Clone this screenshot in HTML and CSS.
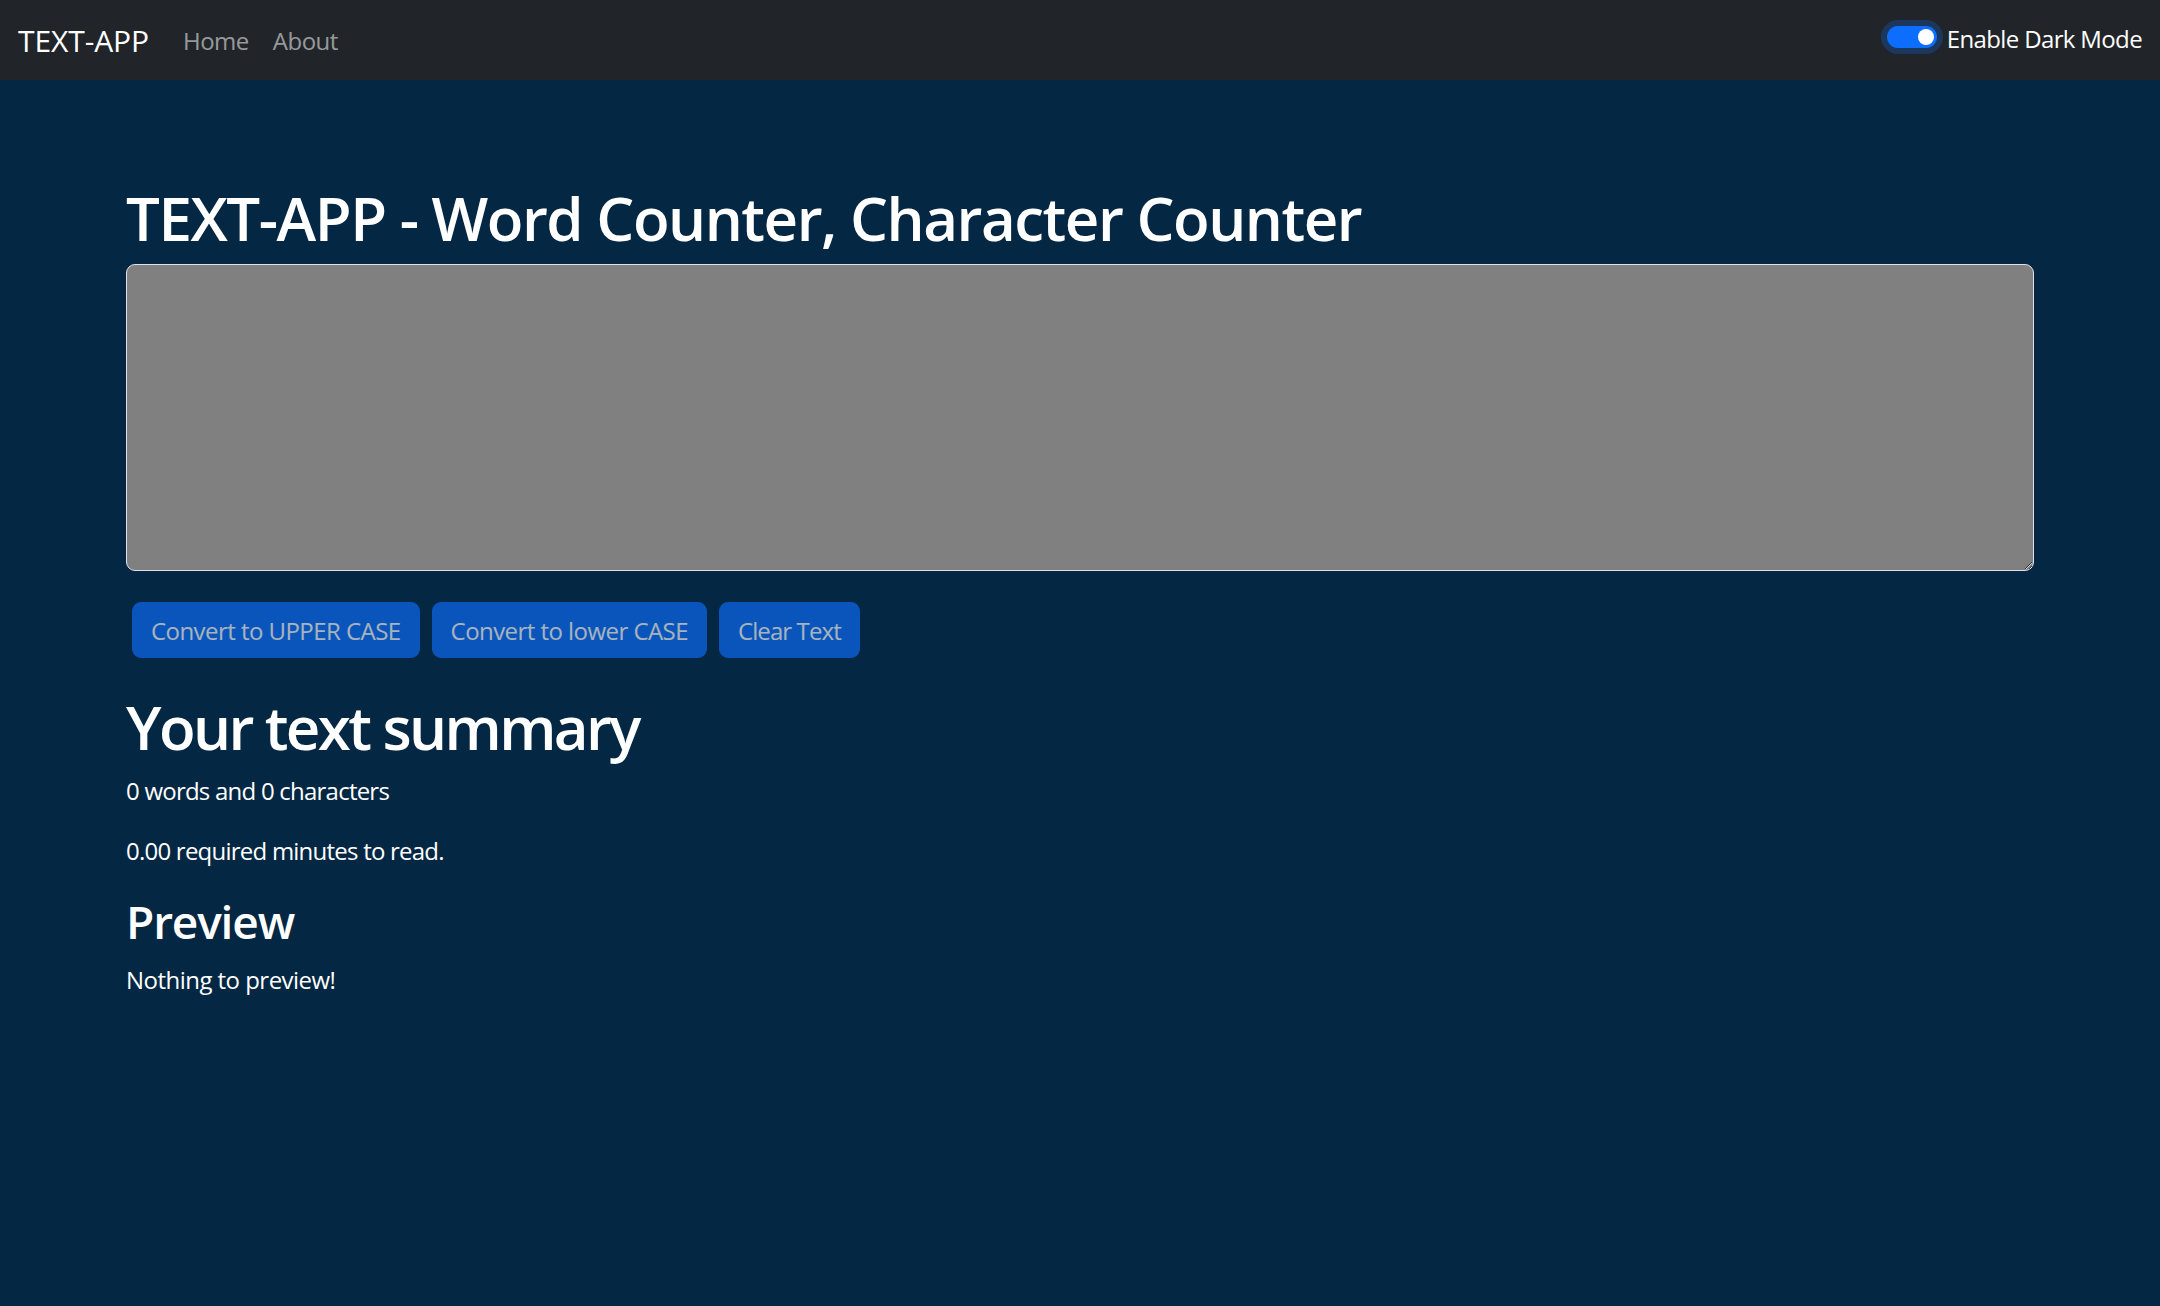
FILE: index.html
```html
<!DOCTYPE html>
<html lang="en">
<head>
<meta charset="utf-8">
<title>TEXT-APP</title>
<link rel="stylesheet" href="styles.css">
</head>
<body>
<nav class="navbar">
  <div class="nav-left">
    <a class="brand" href="#">TEXT-APP</a>
    <a class="nav-link" href="#">Home</a>
    <a class="nav-link" href="#">About</a>
  </div>
  <div class="switch-wrap">
    <span class="switch"><span class="knob"></span></span>
    <label class="switch-label">Enable Dark Mode</label>
  </div>
</nav>
<main class="container">
  <h1 class="title">TEXT-APP - Word Counter, Character Counter</h1>
  <div class="editor"><textarea class="textbox" rows="8"></textarea></div>
  <div class="actions">
    <button class="btn" disabled>Convert to UPPER CASE</button>
    <button class="btn" disabled>Convert to lower CASE</button>
    <button class="btn btn-short" disabled>Clear Text</button>
  </div>
  <h2 class="summary-title">Your text summary</h2>
  <p class="line first">0 words and 0 characters</p>
  <p class="line">0.00 required minutes to read.</p>
  <h2 class="preview-title">Preview</h2>
  <p class="line preview-text">Nothing to preview!</p>
</main>
</body>
</html>
```
FILE: styles.css
```css
* { box-sizing: border-box; }
html, body { margin: 0; padding: 0; }
body {
  background: #042743;
  color: #fff;
  font-family: "Open Sans", "Noto Sans", "Liberation Sans", sans-serif;
  min-height: 1306px;
}

.navbar {
  height: 80px;
  background: #212529;
  display: flex;
  align-items: center;
  justify-content: space-between;
  padding: 0 18px;
}
.nav-left { display: flex; align-items: center; }
.brand {
  color: #fff;
  text-decoration: none;
  font-size: 30px;
  letter-spacing: -0.1px;
  margin-right: 22px;
}
.nav-link {
  color: rgba(255,255,255,.55);
  text-decoration: none;
  font-size: 24px;
  letter-spacing: -0.5px;
  padding: 0 12px;
}
.switch-wrap { display: flex; align-items: center; }
.switch {
  width: 50px;
  height: 22px;
  border-radius: 11px;
  background: #0d6efd;
  box-shadow: 0 0 0 6px rgba(13,110,253,.25);
  display: flex;
  align-items: center;
  justify-content: flex-end;
  padding-right: 3px;
  margin-right: 10px;
  margin-top: -6px;
}
.knob { width: 16px; height: 16px; border-radius: 50%; background: #fff; }
.switch-label {
  font-size: 24px;
  letter-spacing: -0.64px;
  color: #fff;
  margin-bottom: 3px;
}

.container { padding: 102px 126px 0 126px; }
.title {
  margin: 0;
  font-size: 60px;
  line-height: 72px;
  font-weight: 600;
  letter-spacing: -1.48px;
}
.editor { margin-top: 10px; }
.textbox {
  display: block;
  width: 100%;
  height: 307px;
  background: #808080;
  color: #fff;
  border: 1.5px solid #dee2e6;
  border-radius: 9px;
  padding: 9px 18px;
  font-family: inherit;
  font-size: 24px;
}
.actions { display: flex; gap: 12px; margin: 31px 0 0 6px; }
.btn {
  height: 56px;
  padding: 0 18px;
  background: #0d6efd;
  border: 1.5px solid #0d6efd;
  color: #fff;
  border-radius: 9px;
  font-family: inherit;
  font-size: 24px;
  letter-spacing: -0.55px;
  opacity: .65;
}
.btn-short { letter-spacing: -0.9px; }
.summary-title {
  margin: 33px 0 0;
  font-size: 60px;
  line-height: 72px;
  font-weight: 600;
  letter-spacing: -2.6px;
}
.line { margin: 24px 0 0; font-size: 24px; line-height: 36px; letter-spacing: -0.77px; }
.line.first { margin-top: 10px; }
.preview-title {
  margin: 25px 0 0;
  font-size: 46px;
  line-height: 55px;
  font-weight: 600;
  letter-spacing: -1.15px;
}
.preview-text { margin-top: 13px; letter-spacing: -0.53px; }
```
